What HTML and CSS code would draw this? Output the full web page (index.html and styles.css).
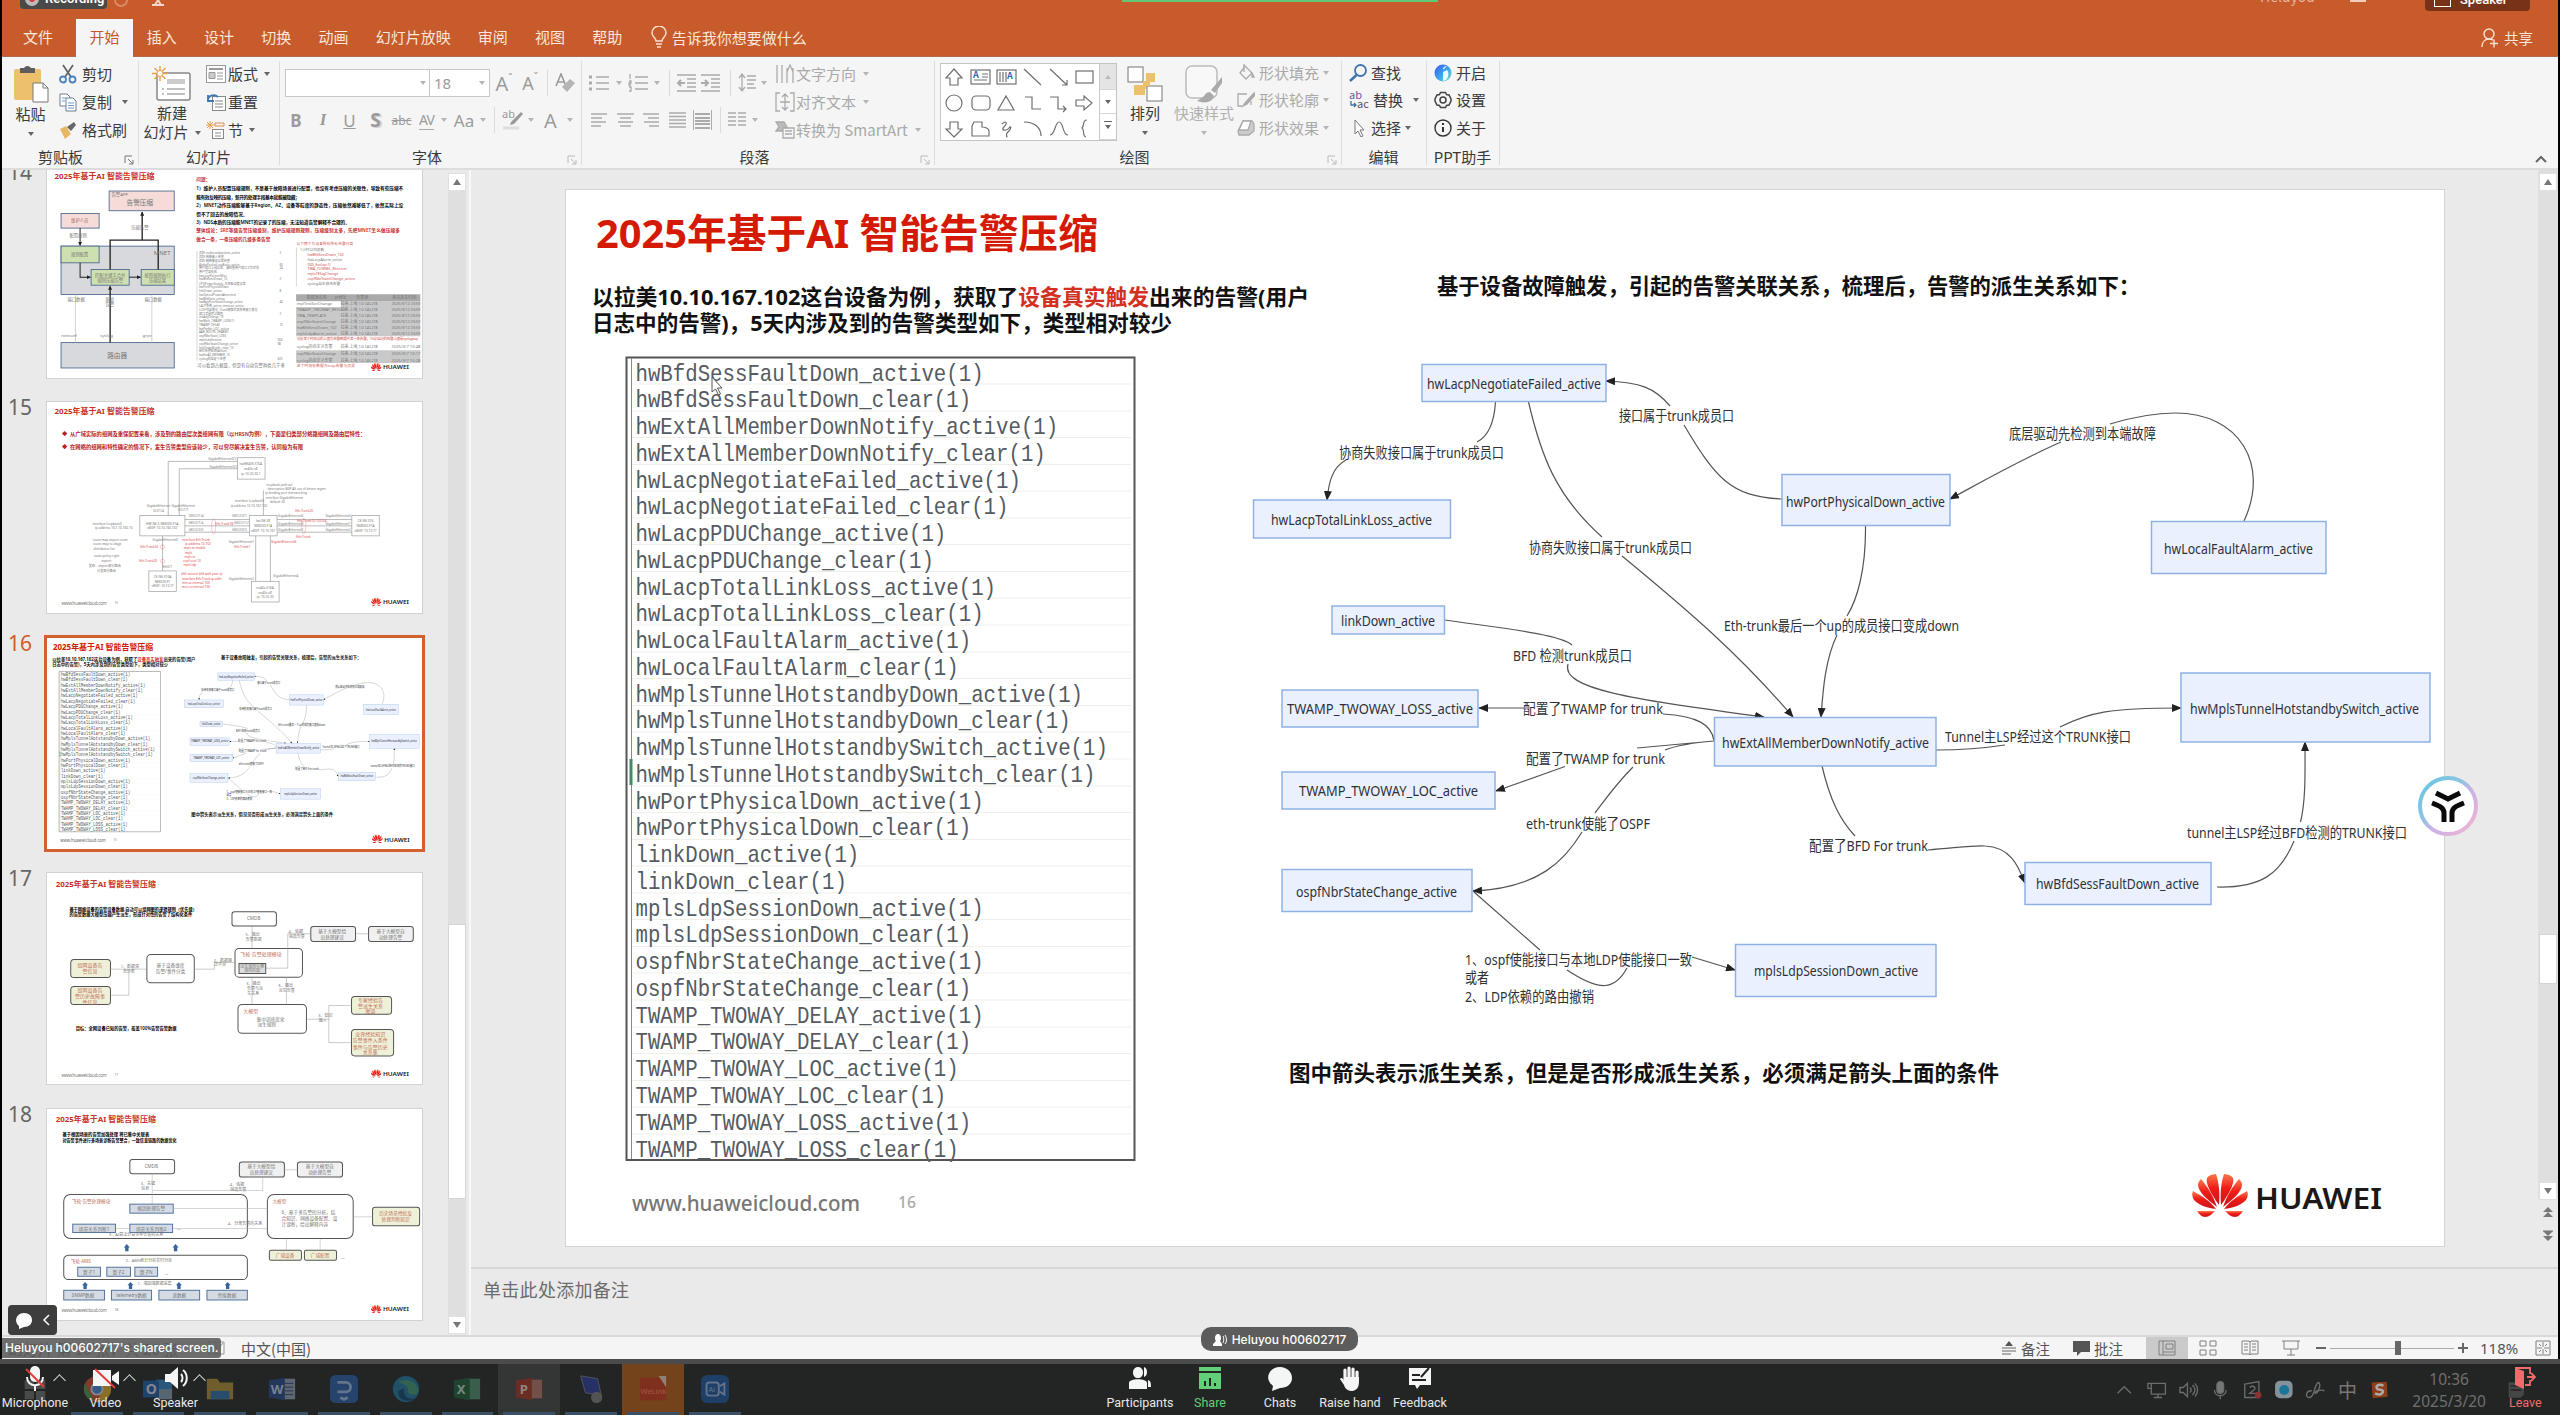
FILE: index.html
```html
<!DOCTYPE html>
<html lang="zh-CN">
<head>
<meta charset="utf-8">
<title>2025年基于AI 智能告警压缩</title>
<link rel="stylesheet" href="styles.css">
</head>
<body>
<svg class="defs" width="0" height="0">
  <defs>
    <marker id="arrow" markerUnits="userSpaceOnUse" markerWidth="10" markerHeight="8" refX="9" refY="4" orient="auto"><path d="M0 0 10 4 0 8z" fill="#222"/></marker>
    <marker id="arrow-s" markerUnits="userSpaceOnUse" markerWidth="12" markerHeight="12" refX="11" refY="6" orient="auto"><path d="M0 0 12 6 0 12z" fill="#222"/></marker>
    <linearGradient id="petal" x1="0" y1="0" x2="0" y2="1"><stop offset="0" stop-color="#fb7a4c"/><stop offset=".45" stop-color="#f01c18"/><stop offset="1" stop-color="#c8141a"/></linearGradient>
    <linearGradient id="ring" x1="0" y1="0" x2="1" y2="1"><stop offset="0" stop-color="#62c5e0"/><stop offset=".4" stop-color="#8fc4e4"/><stop offset=".55" stop-color="#c6b2e6"/><stop offset="1" stop-color="#f6b4d2"/></linearGradient>
    <linearGradient id="orb" x1="0" y1="0" x2="1" y2="1"><stop offset="0" stop-color="#3b5bf0"/><stop offset=".5" stop-color="#3aa0f0"/><stop offset="1" stop-color="#7fe0b0"/></linearGradient>
    <symbol id="hw-mark" viewBox="0 0 56 43">
      <g fill="url(#petal)">
        <path d="M27 31C19 20 13 9 15 4 17 1 21 0 24 0c3 8 4 20 3 31z"/>
        <path d="M29 31C37 20 43 9 41 4 39 1 35 0 32 0c-3 8-4 20-3 31z"/>
        <path d="M25 33C17 27 6 18 6 11c0-2 1-4 3-6 6 7 12 16 16 28z"/>
        <path d="M31 33C39 27 50 18 50 11c0-2-1-4-3-6-6 7-12 16-16 28z"/>
        <path d="M24 35C15 34 3 30 1 24c-1-3-1-5 0-7 9 5 17 10 23 18z"/>
        <path d="M32 35C41 34 53 30 55 24c1-3 1-5 0-7-9 5-17 10-23 18z"/>
        <path d="M23 37H5c2 3 5 6 8 6 4 0 7-3 10-6z"/>
        <path d="M33 37h18c-2 3-5 6-8 6-4 0-7-3-10-6z"/>
      </g>
    </symbol>
    <g id="thumb-logo"><use href="#hw-mark" width="32" height="25"/><text class="hw" x="36" y="19" font-size="16" textLength="78" lengthAdjust="spacingAndGlyphs">HUAWEI</text></g>
  </defs>
</svg>

<div class="app">
  <header class="titlebar">
    <nav class="tabs">
      <span class="tab first">文件</span><span class="tab active">开始</span><span class="tab">插入</span><span class="tab">设计</span><span class="tab">切换</span><span class="tab">动画</span><span class="tab">幻灯片放映</span><span class="tab">审阅</span><span class="tab">视图</span><span class="tab">帮助</span>
      <span class="tell"><svg width="16" height="22" viewBox="0 0 16 22" fill="none" stroke="#fbe0d2" stroke-width="1.5"><path d="M5 15c0-3-4-4-4-8a7 7 0 0 1 14 0c0 4-4 5-4 8zM5 18h6M6 21h4"/></svg>告诉我你想要做什么</span>
    </nav>
    <span class="share-link"><svg width="18" height="20" viewBox="0 0 18 20" fill="none" stroke="#fbe0d2" stroke-width="1.4"><circle cx="8" cy="6" r="5"/><path d="M1 19c0-5 3-8 7-8 2 0 3 .5 4 1M9 15.500h8M13 11.500v8"/></svg>共享</span>
    <div class="pill recording"><i></i>Recording</div>
    <div class="title-bits"><svg width="50" height="8" viewBox="0 0 50 8"><path d="M1 0a6 6 0 0 0 12 0" fill="none" stroke="#d98a68" stroke-width="2"/><path d="M38 5h12M41 5l3-5 3 5" fill="none" stroke="#f5d5c6" stroke-width="2"/></svg></div>
    <div class="green-line"></div>
    <div class="account">Heluyou</div>
    <div class="min-mark"></div>
    <div class="pill speaker-pill"><i></i>Speaker</div>
  </header>

  <section class="ribbon">
    <div class="group g-clip">
      <div class="body">
        <div class="big"><svg width="36" height="38" viewBox="0 0 36 38"><rect x="1" y="4" width="27" height="31" rx="2" fill="#ecc06c"/><path d="M7 8V3h4a4 4 0 0 1 7 0h4v5z" fill="#5d5d5d"/><path d="M20 18h10l5 5v14H20z" fill="#fff" stroke="#777"/><path d="M30 18v5h5" fill="none" stroke="#777"/></svg><b>粘贴</b><i class="caret"></i></div>
        <div class="rows">
          <span><svg width="18" height="20" viewBox="0 0 18 20" fill="none" stroke-width="1.8"><path d="M4 1l8 12M14 1L6 13" stroke="#666"/><circle cx="4" cy="15.500" r="3" stroke="#4b83bd"/><circle cx="13.500" cy="15.500" r="3" stroke="#4b83bd"/></svg>剪切</span>
          <span><svg width="18" height="20" viewBox="0 0 18 20" fill="#fff" stroke="#6f7f92"><path d="M1 2h7l3 3v9H1z"/><path d="M7 6h7l3 3v10H7z"/><path d="M9 11h6M9 13.500h6M9 16h6M3 6h4M3 9h3" stroke="#6b9bcc"/></svg>复制<i class="caret wide"></i></span>
          <span><svg width="18" height="18" viewBox="0 0 18 18"><path d="M1 8l6-3 5 8-6 5z" fill="#e8b765"/><path d="M8 6l7-5 2 3-5 6z" fill="#666"/></svg>格式刷</span>
        </div>
      </div>
      <div class="label">剪贴板</div><svg class="launcher" viewBox="0 0 10 10"><path d="M1 8V1h7M4 4l5 5M9 5v4H5"/></svg>
    </div>
    <div class="group g-slides">
      <div class="body">
        <div class="big"><svg width="40" height="36" viewBox="0 0 40 36"><rect x="5" y="7" width="33" height="27" rx="2" fill="#fff" stroke="#888" stroke-width="1.5"/><path d="M15 13h18v5H15z" fill="#ccc"/><path d="M10 23h2M10 28h2M15 23h18M15 28h18" stroke="#aaa" stroke-width="1.5"/><path d="M8 0v15M0 7.500h16M2.500 2l11 11M13.500 2l-11 11" stroke="#e6a04a" stroke-width="1.400"/><circle cx="8" cy="7.500" r="3" fill="#fff" stroke="#e6a04a"/></svg><b>新建</b><b class="second">幻灯片<i class="caret"></i></b></div>
        <div class="rows">
          <span><svg width="20" height="18" viewBox="0 0 20 18" fill="none" stroke="#999"><rect x=".5" y=".5" width="19" height="17" fill="#fff"/><path d="M3 4h14" stroke-width="2"/><path d="M3 7.500h6v6H3z" fill="#ccc"/><path d="M11 8h6M11 11h6M11 14h6"/></svg>版式<i class="caret"></i></span>
          <span><svg width="20" height="18" viewBox="0 0 20 18" fill="none" stroke="#888"><rect x="6.500" y="3.500" width="13" height="14" fill="#fff"/><path d="M9 8h8M9 11h8M9 14h8"/><path d="M2 8C1 3 8 0 12 4M2 2v6h6" stroke="#3b78b5" stroke-width="1.800"/></svg>重置</span>
          <span><svg width="20" height="18" viewBox="0 0 20 18" fill="none" stroke="#888"><rect x="6.500" y="8.500" width="11" height="9" fill="#fff"/><path d="M9 12h6M9 15h6"/><path d="M9 2h9v3H9z" stroke="#dc8d4b"/><path d="M4 0v8M0 4h8M1 1l6 6M7 1L1 7" stroke="#e6a04a"/></svg>节<i class="caret"></i></span>
        </div>
      </div>
      <div class="label">幻灯片</div>
    </div>
    <div class="group g-font">
      <div class="frow1"><span class="box"><i class="caret dim"></i></span><span class="box size">18<i class="caret dim"></i></span><span class="ft">A<sup>ˆ</sup></span><span class="ft sm">A<sup>ˇ</sup></span><i class="vsep"></i><svg width="20" height="20" viewBox="0 0 20 20"><path d="M1 13L6 1l5 12M3 9h6" fill="none" stroke="#9a9a9a" stroke-width="1.600"/><path d="M7 14l8-8 5 4-8 9z" fill="#b5b5b5"/></svg></div>
      <div class="frow2"><b>B</b><em>I</em><u>U</u><b class="shadow">S</b><s>abc</s><span class="av">AV</span><i class="caret dim"></i><span>Aa</span><i class="caret dim"></i><i class="vsep"></i><svg width="22" height="22" viewBox="0 0 22 22"><text x="0" y="9" font-size="11" fill="#999">ab</text><path d="M9 13L19 3l2 2-9 10-4 1z" fill="#999"/><path d="M1 19h16" stroke="#ddd" stroke-width="3"/></svg><i class="caret dim"></i><span class="ft">A</span><i class="caret dim"></i></div>
      <div class="label">字体</div><svg class="launcher dim" viewBox="0 0 10 10"><path d="M1 8V1h7M4 4l5 5M9 5v4H5"/></svg>
    </div>
    <div class="group g-para">
      <div class="pcol">
        <div class="prow1">
          <svg width="20" height="18" viewBox="0 0 20 18" class="ln"><path d="M7 3h13M7 9h13M7 15h13"/><path d="M0 3h3M0 9h3M0 15h3" stroke-width="3"/></svg><i class="caret dim"></i>
          <svg width="20" height="18" viewBox="0 0 20 18" class="ln"><path d="M7 3h13M7 9h13M7 15h13"/><path d="M2 0v5M1 7h2v2H1v2h2M1 13h2v4H1"/></svg><i class="caret dim"></i><i class="vsep"></i>
          <svg width="20" height="18" viewBox="0 0 20 18" class="ln"><path d="M0 1h19M10 5h9M10 9h9M10 13h9M0 17h19"/><path d="M8 9H1M4 6L1 9l3 3" stroke-width="2"/></svg>
          <svg width="20" height="18" viewBox="0 0 20 18" class="ln"><path d="M0 1h19M10 5h9M10 9h9M10 13h9M0 17h19"/><path d="M0 9h7M4 6l3 3-3 3" stroke-width="2"/></svg><i class="vsep"></i>
          <svg width="18" height="20" viewBox="0 0 18 20" class="ln"><path d="M9 3h9M9 7h9M9 11h7M9 15h9"/><path d="M4 1v17M1 5l3-4 3 4M1 14l3 4 3-4"/></svg><i class="caret dim"></i>
        </div>
        <div class="prow2">
          <svg width="17" height="14" viewBox="0 0 17 14" class="ln"><path d="M0 1h16M0 5h11M0 9h15M0 13h10"/></svg>
          <svg width="17" height="14" viewBox="0 0 17 14" class="ln"><path d="M0 1h17M3 5h11M1 9h15M3 13h11"/></svg>
          <svg width="17" height="14" viewBox="0 0 17 14" class="ln"><path d="M1 1h16M6 5h11M2 9h15M7 13h10"/></svg>
          <svg width="17" height="16" viewBox="0 0 17 16" class="ln"><path d="M0 1h17M0 4.500h17M0 8h17M0 11.500h17M0 15h17"/></svg>
          <svg width="19" height="20" viewBox="0 0 19 20" class="ln"><path d="M0 0v20M19 0v20M2 4h15M2 8h15M2 11h15M2 14h15M2 18h15" stroke-width="2"/></svg><i class="vsep"></i>
          <svg width="18" height="16" viewBox="0 0 18 16" class="ln"><path d="M0 1h8M0 5h8M0 9h8M0 13h8M10 1h8M10 5h8M10 9h8M10 13h8"/></svg><i class="caret dim"></i>
        </div>
      </div>
      <div class="rows dimrows">
        <span><svg width="20" height="20" viewBox="0 0 20 20" class="ln"><path d="M2 1v18M7 1v18M12 19V4M18 19V4M12 8l3-7 3 7"/></svg>文字方向<i class="caret dim"></i></span>
        <span><svg width="20" height="20" viewBox="0 0 20 20" class="ln"><path d="M5 1H1v18h4M15 1h4v18h-4M10 2v16M7 5l3-3 3 3M7 15l3 3 3-3M5 10h10"/></svg>对齐文本<i class="caret dim"></i></span>
        <span><svg width="20" height="18" viewBox="0 0 20 18" class="ln"><path d="M1 1h8l3 5-3 4H1l3-4z" fill="#bbb"/><path d="M8 7h11v10H8zM10 10h7M10 13h7" fill="#f5f5f5"/></svg>转换为 SmartArt<i class="caret dim"></i></span>
      </div>
      <div class="label">段落</div><svg class="launcher dim" viewBox="0 0 10 10"><path d="M1 8V1h7M4 4l5 5M9 5v4H5"/></svg>
    </div>
    <div class="group g-draw">
      <div class="gallery">
        <svg width="158" height="77" viewBox="0 0 158 77" fill="none" stroke="#707070" stroke-width="1.200">
          <path d="M13 5l8 9h-4v7H9v-7H5z"/><rect x="30" y="6" width="19" height="14"/><path d="M41 10h6M41 13h6M33 16h13"/><text x="32" y="14" font-size="9" stroke="none" fill="#2f6cb0" font-weight="700">A</text>
          <rect x="56" y="6" width="19" height="14"/><path d="M59 8v10M62 8v10M65 8v10"/><text x="66" y="15" font-size="9" stroke="none" fill="#2f6cb0" font-weight="700">A</text>
          <path d="M83 5l17 16M109 5l17 16M126 16v5h-5"/><rect x="135" y="7" width="17" height="12"/>
          <circle cx="13" cy="39" r="8"/><rect x="31" y="32" width="18" height="14" rx="4"/><path d="M65 32l8 14H57zM84 33h7v12h9M109 33h8v12h8M122 42l3 3-3 3M135 36h8v-4l8 7-8 7v-4h-8z"/>
          <path d="M13 73l8-8h-4v-7H9v7H5zM33 58h8v5c4 0 7 2 7 4v5H31V62zM61 60c4-4 6-1 2 3s3 4 5 1 3 0-1 4 1 4-2 5M83 58c11 0 17 6 17 14M109 71c5 0 5-13 9-13 5 0 3 13 9 13M146 56c-5 0-2 5-5 8 3 2 0 8 4 9"/>
        </svg>
        <div class="gscroll"><span class="off"><i></i></span><span><i class="caret"></i></span><span><i class="caret more"></i></span></div>
      </div>
      <div class="big arrange"><svg width="36" height="36" viewBox="0 0 36 36"><path d="M19 7h9v9h-9zM7 19h11v10H7z" fill="#ecc06c"/><rect x="1" y="1" width="15" height="15" fill="#fff" stroke="#777"/><rect x="20" y="20" width="15" height="15" fill="#fff" stroke="#777"/><path d="M16 15h7v5h-4v3h-3z" fill="#ecc06c"/></svg><b>排列</b><i class="caret"></i></div>
      <div class="big quick"><svg width="38" height="38" viewBox="0 0 38 38"><rect x="1" y="1" width="31" height="32" rx="6" fill="#f8f8f8" stroke="#bbb" stroke-width="1.500"/><path d="M37 12L26 25l4 3 7-10zM25 27c-4 0-5 3-7 5l-6 4c8 3 16 1 17-5z" fill="#aaa"/></svg><b>快速样式</b><i class="caret dim"></i></div>
      <div class="rows tight dimrows">
        <span><svg width="18" height="18" viewBox="0 0 18 18" class="ln"><path d="M8 2l7 7-6 6-6-6zM7 0v8"/><path d="M15 9l2 4h-2z" fill="#aaa"/></svg>形状填充<i class="caret dim"></i></span>
        <span><svg width="18" height="18" viewBox="0 0 18 18" class="ln"><path d="M10 3H1v12h4M14 10v4"/><path d="M17 2L8 12l-2 3 4-2 8-9z" fill="#aaa"/></svg>形状轮廓<i class="caret dim"></i></span>
        <span><svg width="18" height="18" viewBox="0 0 18 18" class="ln"><path d="M6 2h9l2 3v7l-5 4H2l-1-4z" fill="#ccc"/><path d="M6 2h8l-3 9H2z" fill="#fff"/></svg>形状效果<i class="caret dim"></i></span>
      </div>
      <div class="label">绘图</div><svg class="launcher dim" viewBox="0 0 10 10"><path d="M1 8V1h7M4 4l5 5M9 5v4H5"/></svg>
    </div>
    <div class="group g-edit">
      <div class="rows tight">
        <span><svg width="18" height="18" viewBox="0 0 18 18" fill="none" stroke="#3f74ad" stroke-width="1.800"><circle cx="11.500" cy="6.500" r="5.500"/><path d="M7.500 11L1 17" stroke-width="2.500"/></svg>查找</span>
        <span><svg width="20" height="18" viewBox="0 0 20 18"><text x="0" y="8" font-size="11" fill="#7a559f">ab</text><text x="8" y="17" font-size="11" fill="#555">ac</text><path d="M2 10v4h5M5 12l2 2-2 2" fill="none" stroke="#3f74ad" stroke-width="1.300"/></svg>替换<i class="caret wide"></i></span>
        <span><svg width="18" height="18" viewBox="0 0 18 18"><path d="M6 1v14l3-3 3 6 2-1-3-6h4z" fill="#fff" stroke="#777"/></svg>选择<i class="caret"></i></span>
      </div>
      <div class="label">编辑</div>
    </div>
    <div class="group g-help">
      <div class="rows tight">
        <span><svg width="18" height="18" viewBox="0 0 18 18"><circle cx="9" cy="9" r="8.500" fill="url(#orb)"/><path d="M9 17V8l4-2c2 2 2 7-1 10zM9 6c0-3 2-4 4-4z" fill="#e8fbff"/></svg>开启</span>
        <span><svg width="18" height="18" viewBox="0 0 18 18" fill="none" stroke="#444" stroke-width="1.500"><path d="M6.500 1.500h5l1 2 2.500.5 2 4v2l-2 4-2.500.5-1 2h-5l-1-2L3 14 1 10V8l2-4 2.500-.5z"/><circle cx="9" cy="9" r="3"/></svg>设置</span>
        <span><svg width="18" height="18" viewBox="0 0 18 18" fill="none" stroke="#333" stroke-width="1.400"><circle cx="9" cy="9" r="8"/><path d="M9 4v2M9 8v5" stroke-width="2"/></svg>关于</span>
      </div>
      <div class="label">PPT助手</div>
    </div>
    <svg class="collapse" viewBox="0 0 12 8"><path d="M1 7l5-5 5 5" fill="none" stroke="#666" stroke-width="2"/></svg>
  </section>

  <main class="work">
    <aside class="thumbs">
      <ol>
        <li><b>14</b>
          <svg class="thumb" viewBox="142 3 1123 632">
            <text class="tt" x="164" y="30" textLength="300" lengthAdjust="spacingAndGlyphs">2025年基于AI 智能告警压缩</text>
            <g stroke="#44628c" stroke-width="2.500" fill="#d7d9dc"><rect x="184" y="240" width="339" height="145"/><rect x="184" y="529" width="339" height="76"/><rect x="328" y="75" width="195" height="59" fill="#f6dcd8"/><rect x="184" y="142" width="114" height="44" fill="#f6dcd8"/><g fill="#cfe0b0"><rect x="184" y="240" width="114" height="50"/><rect x="274" y="310" width="114" height="47"/><rect x="424" y="310" width="99" height="47"/></g></g>
            <path d="M227 385v144M456 385v144" stroke="#bbb" fill="none" stroke-width="2"/>
            <g fill="none" stroke="#222" stroke-width="4" marker-end="url(#arrow-s)"><path d="M241 186v52" stroke-width="3"/><path d="M241 290v43h31" stroke-width="3"/><path d="M388 333h34" stroke-width="3"/><path d="M427 222v-84"/><path d="M331 529V360"/></g>
            <path d="M331 310V222h144v88" fill="none" stroke="#222" stroke-width="4"/>
            <g class="mid" font-size="20"><text x="420" y="108">告警压缩</text><text x="487" y="260" font-size="18">MNET</text><text x="352" y="567">路由器</text></g>
            <g class="mid" font-size="13"><text x="240" y="163" fill="#a66">维护人员</text><text x="240" y="265">规则配置</text><text x="331" y="326">匹配关键字合并</text><text x="331" y="341">规则压缩告警</text><text x="473" y="326">按照规则执行</text><text x="473" y="341">压缩结果</text><text x="360" y="84">告警APP</text><text x="235" y="206">配置规则</text><text x="420" y="182">压缩告警</text><text x="229" y="398">端口数据</text><text x="330" y="398">原始</text><text x="330" y="412">告警</text><text x="460" y="398">端口数据</text><text x="208" y="507">netconf</text><text x="320" y="507">syslog</text><text x="442" y="507">grpc</text></g>
            <g class="bb" font-size="14"><text x="589" y="39" fill="#c33">问题：</text><text x="589" y="66" textLength="620">1）维护人员配置压缩规则，不是基于故障场景进行配置，也没有考虑压缩的关联性，导致有些压缩不</text><text x="589" y="92" textLength="310">能有效反映的压缩，新开的处理手段基本就能被隐藏；</text><text x="589" y="117" textLength="620">2）MNET动作压缩能够基于Region、AZ、设备等粒度的静态性，压缩依然难够低了，依然实际上没</text><text x="589" y="143">但不了回去的故障情况。</text><text x="589" y="168" textLength="460">3）NDS本质的压缩能MNET的记录了的压缩，无法知道告警解释不合理的。</text><g fill="#c8282a"><text x="589" y="191" textLength="610">整体结论：SRE等级告警压缩级别，维护压缩规则规则，压缩级别太多，先把MNET怎么做压缩多</text><text x="589" y="218" textLength="222">做合一条，一条压缩的几级多条告警</text></g></g>
            <path d="M591 255v328M889 245v115" stroke="#888"/>
            <g class="tiny" font-size="9"><text x="597" y="262">活跃 outboundpackets_active</text><text x="597" y="273">活跃 网络接入告警</text><text x="597" y="284">活跃 网络接收异常告警</text><text x="597" y="296">AlphaPacketLossRatio_active</text><text x="597" y="307">用户端口上线异常，请检查用户端口工作状态</text><text x="597" y="318">用户登录失败</text><text x="597" y="329">hwLacpPartnerMisc</text><text x="597" y="340">hwBfdSessDown_10</text><text x="597" y="352">CPUPowerSupply_主控板温度异常</text><text x="597" y="363">hwPortPhysicalDown</text><text x="597" y="374">linkDown_active</text><text x="597" y="386">hwOpticalPowerAbnormal</text><text x="597" y="397">hwBfdState_active</text><text x="597" y="408">hwBgpPeerStateChange_active</text><text x="597" y="420">LACP系统_active_timeout_active</text><text x="597" y="431">LLDP邻居变化_Trunk链路对端系统能力变化</text><text x="597" y="442">端口流量超过阈值</text><text x="597" y="453">isisAdjChange_10</text><text x="597" y="464">hwMpls_TWAMP_LOSS(1)</text><text x="597" y="476">TWAMP_DELAY</text><text x="597" y="487">hwPtnExt_LOC_active</text><text x="597" y="498">AAR_ROUTE_SHARED</text><text x="597" y="510">ospfNbrState_LOSS</text><text x="597" y="521">mplsLdpSession</text><text x="597" y="533">ospfNbrStateChange_active</text><text x="597" y="544">linkDownNotify_clear_10</text><text x="597" y="555">BFD告警检测(Active)</text><text x="597" y="567">hwExtAll_MEMBER_10</text><text x="597" y="578">syslog的自定义告警</text></g>
            <g class="tiny" font-size="9"><text x="838" y="262">2</text><text x="838" y="296">60</text><text x="838" y="307">24</text><text x="838" y="340">2</text><text x="838" y="374">8</text><text x="838" y="408">40</text><text x="838" y="442">2</text><text x="838" y="476">10</text><text x="832" y="521">500</text><text x="832" y="533">98</text><text x="832" y="578">620</text></g>
            <text class="tiny" x="592" y="595" font-size="13" textLength="262">可以看到占据量，但是有自动告警种类几千多</text>
            <g class="tiny red" font-size="11"><text x="889" y="231" textLength="170">以下两个为设备所有所有告警归类</text><text x="922" y="265">hwBfdSessDown_102</text><text x="922" y="294">ISIS_Ext(up:1)</text><text x="922" y="308">TWA_TUNNEL_Receiver</text><text x="922" y="323">mplsTESigChange</text><text x="922" y="337">ospfNbrStateChange_active</text></g>
            <g class="tiny" font-size="11"><text x="900" y="251">1小时以内总数</text><text x="922" y="280">hwLacpAlarm_active</text><text x="922" y="351">syslog自主修改告警</text></g>
            <path d="M888 384h372M888 405h372v105H888zM888 552h372v38H888z" fill="#c9c9c9"/><path d="M888 384h372v21H888z" fill="#aaa"/><path d="M888 405h134v17H888zM888 532h134v18H888z" fill="#fff"/>
            <g class="tiny" font-size="12"><text x="920" y="395">数据源名称</text><text x="1004" y="395">IP地址</text><text x="1068" y="395">告警源</text><text x="1176" y="395">首次发生时间</text><text x="890" y="413">mplTestSvcChange</text><text x="890" y="431">TWAMP_TWOWAY_RESULT</text><text x="890" y="449">TWA_TEMPLATE</text><text x="890" y="467">ospfNbrStateChange</text><text x="890" y="485">hwBfdSessDown_102</text><text x="890" y="503">mplsLdpAlarm_active</text><text x="890" y="541">syslog的自定义告警</text><text x="890" y="563">ospfNbrStateChange</text><text x="890" y="583">syslog的自定义告警</text></g>
            <g class="tiny" font-size="12"><text x="1022" y="413" textLength="110">拉美-上海_1.0.140.218</text><text x="1022" y="431" textLength="110">拉美-上海_1.0.140.218</text><text x="1022" y="449" textLength="110">拉美-上海_1.0.140.218</text><text x="1022" y="467" textLength="110">拉美-上海_1.0.140.218</text><text x="1022" y="485" textLength="110">拉美-上海_1.0.140.218</text><text x="1022" y="503" textLength="110">拉美-上海_1.0.140.218</text><text x="1022" y="541" textLength="110">拉美-上海_1.0.140.218</text><text x="1022" y="563" textLength="110">拉美-上海_1.0.140.218</text><text x="1022" y="583" textLength="110">拉美-上海_1.0.140.218</text><text x="1174" y="413" textLength="86">2025/3/12 23:59</text><text x="1174" y="431" textLength="86">2025/3/12 23:59</text><text x="1174" y="449" textLength="86">2025/3/12 23:59</text><text x="1174" y="467" textLength="86">2025/3/12 23:59</text><text x="1174" y="485" textLength="86">2025/3/12 23:59</text><text x="1174" y="503" textLength="86">2025/3/12 23:59</text><text x="1174" y="541" textLength="86">2025/3/7 10:48</text><text x="1174" y="563" textLength="86">2025/3/7 10:17</text><text x="1174" y="583" textLength="86">2025/3/7 10:28</text></g>
            <g class="tiny red" font-size="11"><text x="890" y="517" textLength="364">分析某个时间点的上面为告警数据中某一条告警，10点04分的告警上面是syslogtrap</text><text x="890" y="597" textLength="174">这个时段有数据为trap告警与误报</text></g>
            <use href="#thumb-logo" x="1112" y="590"/>
          </svg></li>
        <li><b>15</b>
          <svg class="thumb" viewBox="142 710 1123 632">
            <text class="tt" x="164" y="738" textLength="300" lengthAdjust="spacingAndGlyphs">2025年基于AI 智能告警压缩</text>
            <g class="bb" font-size="16" fill="#b82020"><text x="187" y="806">◆</text><text x="211" y="806" textLength="885">从广域实际的组网及重保配置来看，涉及到的路由层次类组网有限（以HRSN为例），下面是归类部分络路组网及路由层特性：</text><text x="187" y="845">◆</text><text x="211" y="845" textLength="698">在网络的组网和特性确定的情况下，发生告警类型应该较少，可以穷尽解决发生告警，认同极为有限</text></g>
            <g fill="none" stroke="#999" stroke-width="2"><rect x="712" y="877" width="83" height="64"/><rect x="420" y="1050" width="135" height="61"/><rect x="749" y="1050" width="82" height="61"/><rect x="1055" y="1050" width="82" height="61"/><rect x="447" y="1216" width="82" height="62"/><rect x="754" y="1247" width="83" height="62"/><path d="M712 888H505v162M712 910H538v140M555 1062h194M555 1081h194M555 1100h194M831 1062h224M831 1081h224M831 1100h224M767 1111v136M811 1111v136M488 1111v105M790 1050v-75"/></g>
            <g fill="none" stroke="#e66"><ellipse cx="641" cy="1083" rx="6" ry="23"/><ellipse cx="911" cy="1081" rx="6" ry="23"/><circle cx="488" cy="1144" r="6"/><circle cx="488" cy="1187" r="6"/></g>
            <g class="mid" font-size="9.500"><text x="752" y="897">hwNE40E-X16A</text><text x="752" y="911">ne40e-x8</text><text x="752" y="925">ip: 10.20.30.1</text><text x="487" y="1074">HW-NE-X-NE8000-F1A</text><text x="487" y="1088">eBGP: 10.10.160.102</text><text x="789" y="1067">hw-NE-X8</text><text x="789" y="1081">NE8000-F1A</text><text x="789" y="1095">eBGP: 10.10.167</text><text x="1096" y="1067">CE-NE-X16</text><text x="1096" y="1081">NE8000-F1A</text><text x="1096" y="1095">eBGP: 10.10.77</text><text x="488" y="1234">CE-NE-X16A</text><text x="488" y="1248">NE8000-F1</text><text x="488" y="1262">eBGP: 10.10.77</text><text x="795" y="1267">ne40e-X16A</text><text x="795" y="1281">ne40e-x8</text><text x="795" y="1295">ip: 10.20.30</text>
            <text x="667" y="881">GigabitEthernet0/2</text><text x="670" y="906">GigabitEthernet0/2</text><text x="476" y="1022">GigabitEthernet</text><text x="476" y="1036">0/2/1/4</text><text x="550" y="1021">GigabitEthernet</text><text x="550" y="1034">0/2/1/1</text><text x="589" y="1051">GE0/2/1/4</text><text x="588" y="1073">GE0/2/1/4</text><text x="588" y="1092">GE0/2/0/0</text><text x="718" y="1051">GE0/2/0/1</text><text x="724" y="1071">GE0/2/1/2</text><text x="718" y="1092">GE0/2/0/3</text><text x="872" y="1051">GigabitEthernet0</text><text x="872" y="1074">GigabitEthernet0</text><text x="872" y="1092">GigabitEthernet1</text><text x="1014" y="1051">GigabitEthernet0</text><text x="1014" y="1074">GigabitEthernet1</text><text x="1014" y="1092">GigabitEthernet2</text><text x="322" y="1074">interface loopback0</text><text x="342" y="1088">ip address 10.1.10.160.10</text><text x="331" y="1122">route map export route</text><text x="322" y="1136">route-map to ebgp</text><text x="313" y="1151">distributor-list</text><text x="320" y="1172">route-policy right</text><text x="320" y="1186">export</text><text x="315" y="1202">发布：import部分路由</text><text x="320" y="1216">分发部分路由</text><text x="496" y="1122">GigabitEthernet0</text><text x="502" y="1204">Eth0/1</text><text x="748" y="1007">interface loopback0</text><text x="747" y="1022">ip address 10.10.167.102</text><text x="838" y="958">loopback path acl</text><text x="890" y="972">description BGP AS out of device mgmt</text><text x="858" y="984">ip binding port interworking</text><text x="853" y="997">interface GigabitEthernet</text><text x="832" y="1010">default 30</text><text x="724" y="1129">GigabitEthernet1</text><text x="724" y="1239">GigabitEthernet2</text><text x="857" y="1231">GigabitEthernet4</text></g>
            <g class="mid redmid" font-size="9.500"><text x="673" y="1076">Eth-Trunk1B</text><text x="912" y="1037">Eth-Trunk20</text><text x="935" y="1065">Eth-Trunk10.102/24</text><text x="910" y="1114">Eth-Trunk</text><text x="851" y="1129">GigabitEthernet6</text><text x="727" y="1144">Eth-Trunk1</text><text x="448" y="1144">Eth-Trunk20</text><text x="445" y="1187">Eth-Trunk20</text><text x="588" y="1122">interface Eth-Trunk</text><text x="594" y="1135">ip address 10.102</text><text x="584" y="1148">mpls te enable</text><text x="566" y="1161">mpls</text><text x="570" y="1173">mpls te</text><text x="576" y="1186">ospf cost 10</text><text x="570" y="1199">mpls ldp</text><text x="606" y="1226">bfd session bfd with peer-ip</text><text x="606" y="1239">interface Eth-Trunk.ip addr</text><text x="588" y="1252">min-tx-interval 100</text><text x="588" y="1265">min-rx-interval 100</text></g>
            <text class="tiny" x="185" y="1312" font-size="14" textLength="136">www.huaweicloud.com</text><text class="tiny" x="344" y="1312" font-size="9">15</text>
            <use href="#thumb-logo" x="1112" y="1296"/>
          </svg></li>
        <li class="current"><b>16</b>
          <svg class="thumb" viewBox="566 190 1878 1056"><use href="#slide16"/></svg></li>
        <li><b>17</b>
          <svg class="thumb" viewBox="142 757 1123 632">
            <text class="tt" x="168" y="789" textLength="300" lengthAdjust="spacingAndGlyphs">2025年基于AI 智能告警压缩</text>
            <g class="bb" font-size="13"><text x="209" y="865" textLength="382" lengthAdjust="spacingAndGlyphs">基于网络设备的告警设备数据,自动可以组网图的逻辑规则（优先级）</text><text x="209" y="881" textLength="368" lengthAdjust="spacingAndGlyphs">的告警数据大模型压缩产生派生，形成针对性的告警了结构化条件</text><text x="228" y="1222" textLength="302" lengthAdjust="spacingAndGlyphs">目标：全网设备已知的告警，覆盖100%告警告警数据</text></g>
            <g class="boxes"><rect x="696" y="873" width="133" height="43" rx="8"/><rect x="441" y="1001" width="142" height="85" rx="12"/><rect x="705" y="983" width="202" height="86" rx="12"/><rect x="714" y="1151" width="205" height="86" rx="12"/><rect x="932" y="917" width="134" height="45" rx="8" fill="#f0f0f0"/><rect x="1105" y="917" width="134" height="45" rx="8" fill="#f0f0f0"/><rect x="717" y="1028" width="80" height="30" fill="#ddd"/><g fill="#eef0d8"><rect x="213" y="1016" width="119" height="54" rx="10"/><rect x="213" y="1097" width="119" height="54" rx="10"/><rect x="1054" y="1127" width="120" height="53" rx="10"/><rect x="1054" y="1226" width="126" height="79" rx="10"/></g></g>
            <path d="M332 1045h109M332 1123h55v-78M583 1045h60v-20h62M756 916v67M756 1069v82M859 1069v82M797 1042h66V939h69M1066 939h39M919 1195h68M1054 1154h-68v111h68" fill="none" stroke="#999" stroke-width="1.500"/>
            <g class="mid" font-size="14"><text x="761" y="891">CMDB</text><text x="512" y="1034">基于设备维度</text><text x="512" y="1052">告警/事件分类</text><text x="996" y="932">基于大模型给</text><text x="996" y="950">出处理建议</text><text x="1171" y="932">基于大模型自</text><text x="1171" y="950">动处理告警</text><text x="812" y="1195">集中训练优化</text><text x="800" y="1209">派生规则</text></g>
            <g class="mid" font-size="12"><text x="758" y="942">5、输出</text><text x="761" y="957">告警数据</text><text x="887" y="933">4、依据</text><text x="890" y="947">筛选告警</text><text x="390" y="1038">1、数据清</text><text x="387" y="1052">洗分类</text><text x="669" y="1018">2、数据输</text><text x="660" y="1032">送平台</text><text x="760" y="1089">3、输出</text><text x="765" y="1104">告警与派</text><text x="760" y="1119">生关系</text><text x="857" y="1095">6、输出</text><text x="860" y="1110">派生告警</text><text x="757" y="1038">派生规则引擎</text><text x="757" y="1050">规则匹配</text><text x="976" y="1183">3、知识</text><text x="968" y="1198">输入</text></g>
            <g class="mid warm" font-size="15"><text x="271" y="1034">组网设备告</text><text x="271" y="1052">警信息</text><text x="271" y="1107">组网设备告</text><text x="271" y="1124">警历史故障事</text><text x="271" y="1142">件信息</text><text x="783" y="1001">飞轮·告警处理模块</text><text x="752" y="1169">大模型</text><text x="1111" y="1137">专家经验告</text><text x="1111" y="1154">警派生关系</text><text x="1111" y="1171">图谱</text><text x="1110" y="1239">业界经验知识</text><text x="1110" y="1257">告警事件入条件</text><text x="1110" y="1277">事件与告警历史</text><text x="1110" y="1294">关系集</text></g>
            <text class="tiny" x="185" y="1361" font-size="14" textLength="136">www.huaweicloud.com</text><text class="tiny" x="344" y="1361" font-size="9">17</text>
            <use href="#thumb-logo" x="1112" y="1345"/>
          </svg></li>
        <li><b>18</b>
          <svg class="thumb" viewBox="142 85 1123 632">
            <text class="tt" x="168" y="116" textLength="300" lengthAdjust="spacingAndGlyphs">2025年基于AI 智能告警压缩</text>
            <g class="bb" font-size="13"><text x="188" y="161" textLength="260" lengthAdjust="spacingAndGlyphs">基于根因场景的告警加强处理 将已集中关联表</text><text x="188" y="177" textLength="342" lengthAdjust="spacingAndGlyphs">对告警事件进行多场景诊断告警整合，一致信息链路的数据优化</text></g>
            <g class="boxes"><rect x="390" y="236" width="134" height="43" rx="8"/><rect x="718" y="244" width="135" height="45" rx="8" fill="#f0f0f0"/><rect x="892" y="244" width="135" height="45" rx="8" fill="#f0f0f0"/><rect x="192" y="341" width="550" height="132" rx="20"/><rect x="802" y="341" width="257" height="132" rx="20"/><rect x="192" y="523" width="550" height="73" rx="14"/><g fill="#eef0d8"><rect x="1117" y="379" width="141" height="56" rx="8"/><rect x="808" y="508" width="96" height="30" rx="5"/><rect x="913" y="508" width="96" height="30" rx="5"/></g></g>
            <g fill="#d5dbe5" stroke="#54749e" stroke-width="3"><rect x="390" y="370" width="130" height="27"/><rect x="219" y="430" width="128" height="25"/><rect x="390" y="430" width="128" height="25"/><rect x="234" y="559" width="68" height="27"/><rect x="321" y="559" width="71" height="27"/><rect x="405" y="559" width="68" height="27"/><rect x="192" y="628" width="122" height="29"/><rect x="335" y="628" width="120" height="29"/><rect x="477" y="628" width="122" height="29"/><rect x="621" y="628" width="121" height="29"/></g>
            <path d="M457 279v91M457 329h331v-40M853 267h39M520 383h282M518 443h284M1059 408h58M347 443h43M859 473v35M960 473v35" fill="none" stroke="#aaa" stroke-width="1.500"/>
            <g fill="#35659b"><path d="M381 489l9 11h-4v11h-10v-11h-4zM527 489l9 11h-4v11h-10v-11h-4zM256 603l9 10h-4v11h-10v-11h-4zM392 603l9 10h-4v11h-10v-11h-4zM537 603l9 10h-4v11h-10v-11h-4zM683 603l9 10h-4v11h-10v-11h-4z"/></g>
            <g class="mid" font-size="14"><text x="454" y="257">CMDB</text><text x="784" y="257">基于大模型给</text><text x="784" y="274">出处理建议</text><text x="959" y="257">基于大模型自</text><text x="959" y="274">动处理告警</text><text x="454" y="383">根因处理告警</text><text x="283" y="443">场景关系判断1</text><text x="454" y="443">场景关系判断2</text><text x="537" y="440">…</text><text x="268" y="572">算子1</text><text x="356" y="572">算子2</text><text x="439" y="572">算子N</text><text x="500" y="575">…</text><text x="250" y="641">SNMP数据</text><text x="395" y="641">telemetry数据</text><text x="538" y="641">流数据</text><text x="681" y="641">性能数据</text><text x="925" y="395">6、基于多告警的分析，结</text><text x="928" y="412">合知识、网络设备配置、设</text><text x="914" y="430">计诊断，给出解释内容</text></g>
            <g class="mid" font-size="12"><text x="444" y="309">3、关键</text><text x="436" y="323">信息</text><text x="711" y="311">4、依据</text><text x="715" y="326">筛选告警</text><text x="735" y="427">4、分离告警的关系</text><text x="409" y="461">3、AI算法计算多条告警的关系</text><text x="447" y="540">2、AMS统计分析实时分析</text><text x="464" y="608">1、端到端数据采集</text></g>
            <g class="mid warm" font-size="14"><text x="274" y="361">飞轮·告警处理模块</text><text x="838" y="361">大模型</text><text x="243" y="540">飞轮·AMS</text><text x="1186" y="398">历史场景经验及</text><text x="1186" y="415">处理判断知识</text><text x="855" y="522">广域设备</text><text x="960" y="522">广域配置</text><text x="1028" y="527">…</text></g>
            <text class="tiny" x="185" y="688" font-size="14" textLength="136">www.huaweicloud.com</text><text class="tiny" x="344" y="688" font-size="9">18</text>
            <use href="#thumb-logo" x="1112" y="672"/>
          </svg></li>
      </ol>
      <div class="vbar left"><span class="vbtn"><i class="up"></i></span><span class="vthumb"></span><span class="vbtn"><i class="down"></i></span></div>
    </aside>

    <section class="stage">
      <div class="canvas">
        <svg class="slide" viewBox="566 190 1878 1056">
          <g id="slide16">
            <text class="s-title" x="596" y="232" textLength="502" lengthAdjust="spacingAndGlyphs">2025年基于AI 智能告警压缩</text>
            <g class="s-bold">
              <text x="592" y="296" textLength="717" lengthAdjust="spacingAndGlyphs">以拉美10.10.167.102这台设备为例，获取了<tspan fill="#d3301f">设备真实触发</tspan>出来的告警(用户</text>
              <text x="592" y="322" textLength="580" lengthAdjust="spacingAndGlyphs">日志中的告警)，5天内涉及到的告警类型如下，类型相对较少</text>
              <text x="1437" y="285" textLength="703" lengthAdjust="spacingAndGlyphs">基于设备故障触发，引起的告警关联关系，梳理后，告警的派生关系如下：</text>
              <text x="1289" y="1072" textLength="710" lengthAdjust="spacingAndGlyphs">图中箭头表示派生关系，但是是否形成派生关系，必须满足箭头上面的条件</text>
            </g>
            <path d="M626.500 357.500H1134.500V1160H626.500z" fill="#fff" stroke="#555" stroke-width="2"/>
            <path d="M631.500 358v801" stroke="#888"/>
            <path d="M632 384H1131M632 411H1131M632 437.500H1131M632 464.500H1131M632 491H1131M632 518H1131M632 544.500H1131M632 571.500H1131M632 598H1131M632 625H1131M632 652H1131M632 678.500H1131M632 705.500H1131M632 732H1131M632 759H1131M632 786H1131M632 812.500H1131M632 839.500H1131M632 866H1131M632 893H1131M632 919.500H1131M632 946.500H1131M632 973H1131M632 1000H1131M632 1027H1131M632 1053.500H1131M632 1080.500H1131M632 1107H1131M632 1134H1131" stroke="#efefea"/>
            <path d="M631 759v26" stroke="#3f8a6a" stroke-width="3"/>
            <g class="alarms" transform="translate(635.5 380.5) scale(.864 1)">
              <text y="0">hwBfdSessFaultDown_active(1)</text><text y="26.760">hwBfdSessFaultDown_clear(1)</text><text y="53.520">hwExtAllMemberDownNotify_active(1)</text><text y="80.280">hwExtAllMemberDownNotify_clear(1)</text><text y="107.040">hwLacpNegotiateFailed_active(1)</text><text y="133.800">hwLacpNegotiateFailed_clear(1)</text><text y="160.560">hwLacpPDUChange_active(1)</text><text y="187.320">hwLacpPDUChange_clear(1)</text><text y="214.080">hwLacpTotalLinkLoss_active(1)</text><text y="240.840">hwLacpTotalLinkLoss_clear(1)</text><text y="267.600">hwLocalFaultAlarm_active(1)</text><text y="294.360">hwLocalFaultAlarm_clear(1)</text><text y="321.120">hwMplsTunnelHotstandbyDown_active(1)</text><text y="347.880">hwMplsTunnelHotstandbyDown_clear(1)</text><text y="374.640">hwMplsTunnelHotstandbySwitch_active(1)</text><text y="401.400">hwMplsTunnelHotstandbySwitch_clear(1)</text><text y="428.160">hwPortPhysicalDown_active(1)</text><text y="454.920">hwPortPhysicalDown_clear(1)</text><text y="481.680">linkDown_active(1)</text><text y="508.440">linkDown_clear(1)</text><text y="535.200">mplsLdpSessionDown_active(1)</text><text y="561.960">mplsLdpSessionDown_clear(1)</text><text y="588.720">ospfNbrStateChange_active(1)</text><text y="615.480">ospfNbrStateChange_clear(1)</text><text y="642.240">TWAMP_TWOWAY_DELAY_active(1)</text><text y="669">TWAMP_TWOWAY_DELAY_clear(1)</text><text y="695.760">TWAMP_TWOWAY_LOC_active(1)</text><text y="722.520">TWAMP_TWOWAY_LOC_clear(1)</text><text y="749.280">TWAMP_TWOWAY_LOSS_active(1)</text><text y="776.040">TWAMP_TWOWAY_LOSS_clear(1)</text>
            </g>
            <g fill="none" stroke="#555" stroke-width="1.200">
              <path d="M1782 499C1730 497 1715 477 1684 425M1495.500 402C1494 425 1487 437 1477 442M1528.500 402C1541 455 1555 495 1602 537M1865.500 526C1866 570 1857 600 1847 616M1444.500 620C1500 628 1560 634 1572 645M1663 714C1696 716 1712 724 1714 741M1714 741L1637 748M1714 741C1690 743 1675 746 1665 750M1633 767C1615 785 1605 800 1595 813M1474 892L1540 950M1567 970C1600 992 1615 990 1627 968M1822 766C1830 800 1840 820 1855 836M1936 750C1965 750 1985 748 2005 745M2217 887C2260 888 2280 875 2294 841M2244 521C2270 465 2240 413 2175 413 2150 413 2130 418 2110 424"/>
              <g marker-end="url(#arrow)"><path d="M1670 406C1655 388 1640 382 1606 381"/><path d="M1346 460C1333 467 1329 480 1327 500"/><path d="M1622 556C1690 612 1740 655 1793 717"/><path d="M1837 635C1825 660 1823 690 1821 717"/><path d="M1568 664C1560 690 1640 700 1764 717"/><path d="M1524 708H1479"/><path d="M1565 766.500L1496 791"/><path d="M1582 832C1565 860 1540 888 1473 891"/><path d="M1692 957L1735 970"/><path d="M1928 850C1955 848 1975 845 1985 846 2010 847 2018 865 2025 883"/><path d="M2060 727C2090 712 2110 708 2181 708"/><path d="M2300.500 822C2306 800 2305 770 2305 742"/><path d="M2061 442C2020 460 1985 480 1950 499"/></g>
            </g>
            <g fill="#ebf0fe" stroke="#8eb2e6" stroke-width="1.500">
              <rect x="1422" y="364.500" width="184" height="37"/><rect x="1253.500" y="500" width="197" height="38"/><rect x="1782" y="474.500" width="168" height="51"/><rect x="1332" y="606" width="112.500" height="28"/><rect x="1282" y="690" width="196" height="37"/><rect x="1282" y="772" width="213" height="37"/><rect x="1282" y="869.500" width="190" height="42"/><rect x="1714.500" y="717.500" width="221.500" height="48.500"/><rect x="1735.500" y="944.500" width="200.500" height="52"/><rect x="2151.500" y="521.500" width="174.500" height="52"/><rect x="2181" y="673" width="249" height="69"/><rect x="2025" y="862.500" width="186" height="42"/>
            </g>
            <g class="nodes">
              <text x="1427" y="383" textLength="174" lengthAdjust="spacingAndGlyphs">hwLacpNegotiateFailed_active</text><text x="1271" y="519" textLength="161" lengthAdjust="spacingAndGlyphs">hwLacpTotalLinkLoss_active</text><text x="1786" y="501" textLength="159" lengthAdjust="spacingAndGlyphs">hwPortPhysicalDown_active</text><text x="1341" y="620" textLength="94" lengthAdjust="spacingAndGlyphs">linkDown_active</text><text x="1287" y="708" textLength="186" lengthAdjust="spacingAndGlyphs">TWAMP_TWOWAY_LOSS_active</text><text x="1299" y="790" textLength="179" lengthAdjust="spacingAndGlyphs">TWAMP_TWOWAY_LOC_active</text><text x="1296" y="891" textLength="161" lengthAdjust="spacingAndGlyphs">ospfNbrStateChange_active</text><text x="1722" y="742" textLength="207" lengthAdjust="spacingAndGlyphs">hwExtAllMemberDownNotify_active</text><text x="1754" y="970" textLength="164" lengthAdjust="spacingAndGlyphs">mplsLdpSessionDown_active</text><text x="2164" y="548" textLength="149" lengthAdjust="spacingAndGlyphs">hwLocalFaultAlarm_active</text><text x="2190" y="708" textLength="229" lengthAdjust="spacingAndGlyphs">hwMplsTunnelHotstandbySwitch_active</text><text x="2036" y="883" textLength="163" lengthAdjust="spacingAndGlyphs">hwBfdSessFaultDown_active</text>
              <text x="1619" y="415" textLength="115" lengthAdjust="spacingAndGlyphs">接口属于trunk成员口</text><text x="1339" y="452" textLength="165" lengthAdjust="spacingAndGlyphs">协商失败接口属于trunk成员口</text><text x="1529" y="547" textLength="163" lengthAdjust="spacingAndGlyphs">协商失败接口属于trunk成员口</text><text x="1724" y="625" textLength="235" lengthAdjust="spacingAndGlyphs">Eth-trunk最后一个up的成员接口变成down</text><text x="1513" y="655" textLength="119" lengthAdjust="spacingAndGlyphs">BFD 检测trunk成员口</text><text x="1523" y="708" textLength="140" lengthAdjust="spacingAndGlyphs">配置了TWAMP for trunk</text><text x="1526" y="758" textLength="139" lengthAdjust="spacingAndGlyphs">配置了TWAMP for trunk</text><text x="1526" y="823" textLength="124" lengthAdjust="spacingAndGlyphs">eth-trunk使能了OSPF</text><text x="1809" y="845" textLength="119" lengthAdjust="spacingAndGlyphs">配置了BFD For trunk</text><text x="1945" y="736" textLength="186" lengthAdjust="spacingAndGlyphs">Tunnel主LSP经过这个TRUNK接口</text><text x="2009" y="433" textLength="147" lengthAdjust="spacingAndGlyphs">底层驱动先检测到本端故障</text><text x="2187" y="832" textLength="220" lengthAdjust="spacingAndGlyphs">tunnel主LSP经过BFD检测的TRUNK接口</text><text x="1465" y="959" textLength="227" lengthAdjust="spacingAndGlyphs">1、ospf使能接口与本地LDP使能接口一致</text><text x="1465" y="977" textLength="24" lengthAdjust="spacingAndGlyphs">或者</text><text x="1465" y="996" textLength="129" lengthAdjust="spacingAndGlyphs">2、LDP依赖的路由撤销</text>
            </g>
            <text class="s-foot" x="632" y="1202" textLength="228" lengthAdjust="spacingAndGlyphs">www.huaweicloud.com</text><text class="s-foot num" x="898" y="1202" textLength="18" lengthAdjust="spacingAndGlyphs">16</text>
            <use href="#hw-mark" x="2192" y="1174" width="56" height="43"/><text class="hw" x="2255" y="1209" font-size="29" textLength="127" lengthAdjust="spacingAndGlyphs">HUAWEI</text>
          </g>
        </svg>
        <div class="vbar right"><span class="vbtn"><i class="up"></i></span><span class="vthumb"></span><span class="vbtn"><i class="down"></i></span><svg width="16" height="48" viewBox="0 0 16 48"><path d="M8 7l5 5H3zM8 12l5 5H3zM8 41l5-5H3zM8 36l5-5H3z" fill="#777"/><path d="M3 31h10" stroke="#777"/></svg></div>
      </div>
      <div class="notes">单击此处添加备注</div>
    </section>
    <svg class="cursor" viewBox="0 0 13 20"><path d="M1 1v15l3.500-3 3 6 2-1-3-6H11z" fill="#fff" stroke="#555"/></svg>
    <svg class="float-ball" viewBox="0 0 62 62"><circle cx="31" cy="31" r="28" fill="#fff" stroke="url(#ring)" stroke-width="4"/><g fill="none" stroke="#0b0b0b" stroke-width="5"><path d="M19 18l12 6 12-6M15 28c8 3 12 5 12 10v9M47 28c-8 3-12 5-12 10v9"/></g></svg>
  </main>

  <footer class="status">
    <span class="slide-count">幻灯片 第 16 张，共 20 张</span><svg class="book" width="18" height="14" viewBox="0 0 18 14"><path d="M1 1h16v12H1zM9 1v12M11 8l5-6" fill="none" stroke="#999"/></svg><span class="lang">中文(中国)</span>
    <div class="status-right">
      <span class="st note"><svg width="14" height="14" viewBox="0 0 14 14"><path d="M7 0l4 5H3z" fill="#555"/><path d="M0 7h14M0 10h14M0 13h9" stroke="#666"/></svg>备注</span>
      <span class="st comment"><svg width="19" height="16" viewBox="0 0 19 16"><path d="M1 1h17v11H9l-4 4v-4H1z" fill="#555"/></svg>批注</span>
      <span class="view on"><svg width="18" height="16" viewBox="0 0 18 16"><path d="M1 1h16v14H1zM5 1v14M8 4h7v5H8zM5 12h12"/></svg></span>
      <span class="view"><svg width="18" height="16" viewBox="0 0 18 16"><path d="M1 1h6v5H1zM11 1h6v5h-6zM1 10h6v5H1zM11 10h6v5h-6z"/></svg></span>
      <span class="view"><svg width="18" height="16" viewBox="0 0 18 16"><path d="M1 1h7l1 1 1-1h7v13h-7l-1 1-1-1H1zM9 2v13M3 4h4M3 7h4M3 10h4M11 4h4M11 7h4M11 10h4"/></svg></span>
      <span class="view"><svg width="18" height="16" viewBox="0 0 18 16"><path d="M0 1h18M2 1v8h14V1M9 9v6M5 15h8"/></svg></span>
      <span class="zoom"><i class="minus"></i><i class="track"><i></i></i><i class="plus"></i></span><span class="pct">118%</span>
      <svg class="fit" width="16" height="16" viewBox="0 0 16 16"><path d="M1 1h14v14H1zM8 2v5M8 9v5M2 8h5M9 8h5M4 4l2 2M12 4l-2 2M4 12l2-2M12 12l-2-2"/></svg>
    </div>
  </footer>

  <section class="dock">
    <div class="taskbar">
      <div class="apps">
        <span class="app-i none"><svg viewBox="0 0 32 32"><path d="M5 7h10v9H5zM17 6h10v10H17zM5 18h10v9H5zM17 18h10v10H17z" fill="#777"/></svg></span>
        <span class="app-i"><svg viewBox="0 0 32 32"><circle cx="16" cy="16" r="14" fill="#a8432f"/><path d="M3 10l10 19A14 14 0 0 1 3 10z" fill="#3a7d45"/><path d="M16 9h13a14 14 0 0 1-14 21l7-11z" fill="#b08b2c"/><circle cx="16" cy="16" r="6" fill="#3d6fae" stroke="#aaa" stroke-width="2"/></svg></span>
        <span class="app-i"><svg viewBox="0 0 32 32"><path d="M14 6h17v20H14z" fill="#2f6ba0"/><path d="M14 16h17v11H14z" fill="#6a7f8f"/><rect y="7" width="17" height="18" fill="#1b4f86"/><text x="3" y="21" font-size="15" font-weight="700" fill="#aab">O</text></svg></span>
        <span class="app-i"><svg viewBox="0 0 32 32"><path d="M2 5h11l3 4h14v18H2z" fill="#8d7331"/><path d="M6 18h20v9H6z" fill="#2b5d8c"/></svg></span>
        <span class="app-i"><svg viewBox="0 0 32 32"><path d="M15 5h15v22H15z" fill="#777f90"/><path d="M19 10h9M19 14h9M19 18h9M19 22h9" stroke="#23395f"/><path d="M2 7l17-3v24L2 25z" fill="#233f72"/><text x="4" y="21" font-size="14" font-weight="700" fill="#98a4ba">W</text></svg></span>
        <span class="app-i"><svg viewBox="0 0 32 32"><rect x="1" y="1" width="30" height="30" rx="6" fill="#264f86"/><path d="M9 9h9a5 5 0 0 1 0 10H9M12 25l4 2 4-2" fill="none" stroke="#7c93b5" stroke-width="3"/></svg></span>
        <span class="app-i"><svg viewBox="0 0 32 32"><circle cx="16" cy="16" r="14" fill="#1f6382"/><path d="M8 9c10-7 24 2 20 12-4 2-10 1-10-3 1-6-6-8-10-9z" fill="#397b62"/><path d="M14 15c-2 8 4 13 12 11-8 6-20 1-18-8z" fill="#163d60"/></svg></span>
        <span class="app-i"><svg viewBox="0 0 32 32"><path d="M13 5h17v22H13z" fill="#45735a"/><path d="M2 7l17-3v24L2 25z" fill="#1d5135"/><text x="5" y="21" font-size="14" font-weight="700" fill="#97ac9f">X</text></svg></span>
        <span class="app-i lit"><svg viewBox="0 0 32 32"><path d="M13 6h17v20H13z" fill="#8a5a50"/><path d="M2 7l17-3v24L2 25z" fill="#7e2a1d"/><text x="6" y="21" font-size="14" font-weight="700" fill="#b9a19c">P</text></svg></span>
        <span class="app-i"><svg viewBox="0 0 32 32"><path d="M5 2l18 3 4 18-17-3z" fill="#26367e" stroke="#667"/><circle cx="22" cy="25" r="6" fill="#666"/></svg></span>
        <span class="app-i orange"><svg viewBox="0 0 32 32"><path d="M2 4h22l6 8v16H2z" fill="#83291f"/><path d="M22 2l8 12V2z" fill="#999"/><text x="3" y="21" font-size="8" fill="#b5625a">WeLink</text></svg></span>
        <span class="app-i"><svg viewBox="0 0 32 32"><rect x="1" y="1" width="30" height="30" rx="7" fill="#1d4a82"/><rect x="7" y="9" width="13" height="14" rx="3" fill="none" stroke="#7d92b0" stroke-width="2"/><path d="M21 13l5-3v12l-5-3" fill="none" stroke="#7d92b0" stroke-width="2"/><text x="9" y="19" font-size="8" fill="#7d92b0">Ai</text></svg></span>
      </div>
      <div class="tray">
        <svg viewBox="0 0 24 24"><path d="M4 16l8-8 8 8"/></svg><svg viewBox="0 0 24 24"><path d="M6 4h17v13H6zM14 17v4M9 21h10M2 4h4v6H2z"/></svg><svg viewBox="0 0 24 24"><path d="M2 9h4l5-5v16l-5-5H2zM14 9c2 2 2 4 0 6M17 6c4 4 4 8 0 12M20 4c4 5 4 11 0 16"/></svg><svg viewBox="0 0 24 24"><rect x="8" y="2" width="8" height="14" rx="4" fill="#777"/><path d="M5 12c0 9 14 9 14 0M12 19v4"/></svg><svg viewBox="0 0 24 24"><path d="M3 5l17-3v19H3zM9 9c3-3 7-1 6 2l-6 5h7"/><circle cx="19" cy="18" r="4" fill="#8e3030" stroke="none"/></svg><svg viewBox="0 0 24 24"><rect x="1" y="1" width="21" height="21" rx="6" fill="#85929a" stroke="none"/><circle cx="12" cy="12" r="6" fill="#19769a" stroke="none"/></svg><svg viewBox="0 0 24 24"><path d="M8 13c-7-1-9 8-3 8 7 0 5-16 11-18 4 1-1 14-4 13-2-3 8-5 11-3"/></svg><span class="ime">中</span><svg viewBox="0 0 24 24"><path d="M3 3l18-1 1 18-18 2z" fill="#8c3f19" stroke="none"/><path d="M17 7c-5-3-11 0-7 4 6 1 9 2 4 6-2 1-5 0-7-1" stroke="#aaa" stroke-width="3"/></svg>
        <span class="clock"><span>10:36</span><span>2025/3/20</span></span>
        <svg class="notif" viewBox="0 0 24 24"><path d="M2 2h20v16l-4 4H2zM5 7h13M5 12h13" fill="#555"/></svg>
      </div>
    </div>
    <div class="controls">
      <div class="av-set">
        <span class="ctl"><svg width="22" height="27" viewBox="0 0 22 27"><rect x="6" y="1" width="10" height="16" rx="5" fill="#f5f5f5"/><path d="M3 12c0 11 16 11 16 0M11 20v6" fill="none" stroke="#f5f5f5" stroke-width="2"/><path d="M2 4l18 18" stroke="#e23b3b" stroke-width="2"/></svg>Microphone</span><i class="chev"></i>
        <span class="ctl"><svg width="28" height="22" viewBox="0 0 28 22"><path d="M1 3h18v16H1zM20 9l7-5v14l-7-5z" fill="#f5f5f5"/><path d="M3 2l20 19" stroke="#e23b3b" stroke-width="2"/></svg>Video</span><i class="chev"></i>
        <span class="ctl"><svg width="24" height="24" viewBox="0 0 24 24"><path d="M1 8h5l8-7v22l-8-7H1z" fill="#f5f5f5"/><path d="M17 8c2 2 2 6 0 8M19 4c5 4 5 12 0 16" fill="none" stroke="#f5f5f5" stroke-width="2"/></svg>Speaker</span><i class="chev"></i>
      </div>
      <div class="mid-set">
        <span class="ctl"><svg width="24" height="24" viewBox="0 0 24 24" fill="#f5f5f5"><path d="M10 1a5 5 0 0 1 5 5c0 4-2 6-5 6s-5-2-5-6a5 5 0 0 1 5-5zM1 17c0-5 18-5 18 0v6H1zM16 1c4 1 4 9 0 10zM20 14c3 1 3 4 3 7h-3z"/></svg>Participants</span>
        <span class="ctl share"><svg width="24" height="24" viewBox="0 0 24 24"><path d="M1 1h22v4H1zM1 7h22v16H1z" fill="#64cf79"/><path d="M7 15v5M12 12v8M17 17v3" stroke="#222" stroke-width="2"/></svg>Share</span>
        <span class="ctl"><svg width="26" height="26" viewBox="0 0 26 26"><path d="M13 2c7 0 12 5 12 11s-5 10-12 10l-8 3 1-5C-4 13 3 2 13 2z" fill="#f5f5f5"/></svg>Chats</span>
        <span class="ctl"><svg width="22" height="25" viewBox="0 0 22 25"><path d="M6 14V4m4 9V2m4 11V3m4 11V6" stroke="#f5f5f5" stroke-width="3.200" stroke-linecap="round"/><path d="M5 11h15v5c0 12-13 11-15 3L1 13c1-2 3-1 4 2z" fill="#f5f5f5"/></svg>Raise hand</span>
        <span class="ctl"><svg width="24" height="24" viewBox="0 0 24 24"><path d="M1 2h22v17H12l-3 4-2-4H1z" fill="#f5f5f5"/><path d="M4 9h8M4 14h14M13 11l8-9" stroke="#222" stroke-width="2"/></svg>Feedback</span>
      </div>
      <span class="ctl leave"><svg width="22" height="23" viewBox="0 0 22 23"><path d="M1 1l9 3v18l-9-4z" fill="#f4696b"/><path d="M1 1h15v6M16 13v5h-5M13 10h7M17 6l4 4-4 4" fill="none" stroke="#f4696b" stroke-width="1.800"/></svg>Leave</span>
    </div>
  </section>

  <div class="chat-pill"><svg width="18" height="17" viewBox="0 0 18 17"><path d="M9 1c5 0 8 3 8 7s-3 7-8 7l-5 2v-3C-2 9 2 1 9 1z" fill="#fff"/></svg><svg width="8" height="12" viewBox="0 0 8 12"><path d="M7 1L2 6l5 5" fill="none" stroke="#fff" stroke-width="1.500"/></svg></div>
  <div class="shared-tag">Heluyou h00602717's shared screen.</div>
  <div class="talk-pill"><svg width="14" height="13" viewBox="0 0 14 13"><path d="M5 1c3 0 4 5 2 7l2 3v2H0v-2l3-3C1 6 2 1 5 1z" fill="#fff"/><path d="M10 3c1 2 1 5 0 7M12 2c2 3 2 7 0 9" fill="none" stroke="#fff"/></svg>Heluyou h00602717</div>
</div>
</body>
</html>
```
FILE: styles.css
```css
* { box-sizing: border-box; }
body { margin: 0; width: 2560px; height: 1415px; overflow: hidden; background: #000; font-family: "Noto Sans", "Noto Sans CJK SC", sans-serif; }
.defs { position: absolute; }
i { font-style: normal; }
.app { position: relative; display: flex; flex-direction: column; width: 2560px; height: 1415px; overflow: hidden; }

/* title bar */
.titlebar { position: relative; display: flex; justify-content: space-between; height: 57px; margin: 0 2px; background: #c75b2c; border-bottom: 1px solid #b06a4c; color: #fbe6db; font: 15px "Noto Sans CJK SC", sans-serif; }
.tabs { display: flex; align-items: stretch; padding-top: 19px; }
.tab { padding: 0 13.6px; line-height: 35px; }
.tab.first { padding: 0 23px 0 21px; }
.tab.active { background: #f5f5f5; color: #c4582c; height: 38px; }
.tell { display: flex; align-items: center; gap: 5px; margin-left: 15px; height: 38px; padding-bottom: 2px; }
.share-link { display: flex; align-items: center; gap: 5px; padding: 19px 25px 0 0; font-size: 14.5px; }
.pill { position: absolute; top: -12px; display: flex; align-items: center; overflow: hidden; border-radius: 4px; color: #fff; font: 600 13px Roboto, sans-serif; }
.recording { left: 18px; width: 87px; height: 21px; background: #494949; gap: 6px; padding-left: 5px; }
.recording i { width: 14px; height: 14px; border: 4px solid #bbb; border-radius: 50%; background: #d33; }
.speaker-pill { left: 2423px; width: 105px; height: 23px; background: #783217; gap: 9px; padding-left: 9px; font-weight: 500; }
.speaker-pill i { width: 17px; height: 15px; border: 1px solid #fff; }
.title-bits { position: absolute; left: 112px; top: 0; }
.title-bits svg { display: block; }
.green-line { position: absolute; left: 1120px; top: 0; width: 316px; height: 2px; background: #62c878; }
.account { position: absolute; left: 2258px; top: -13px; color: #e9b49c; font-size: 14px; line-height: 18px; }
.min-mark { position: absolute; left: 2348px; top: 0; width: 16px; height: 2px; background: #f2cdbb; }

/* ribbon */
.ribbon { position: relative; display: flex; height: 113px; margin: 0 2px; background: #f5f5f5; border-bottom: 2px solid #dcdcdc; color: #3a3a3a; font: 15px/20px "Noto Sans CJK SC", sans-serif; }
.group { position: relative; flex: none; }
.group::after { content: ""; position: absolute; right: 0; top: 4px; height: 104px; width: 1px; background: #dcdcdc; }
.g-clip { width: 137px; } .g-slides { width: 141px; } .g-font { width: 302px; } .g-para { width: 353px; } .g-draw { width: 407px; } .g-edit { width: 85px; } .g-help { width: 73px; }
.label { position: absolute; left: 0; right: 8px; bottom: 1px; text-align: center; }
.g-slides .label, .g-edit .label, .g-help .label { right: 2px; }
.g-clip .label { right: 20px; }
.launcher { position: absolute; right: 5px; bottom: 3px; width: 10px; height: 10px; fill: none; stroke: #777; }
.launcher.dim { stroke: #bbb; }
.body, .g-para, .g-draw, .g-edit, .g-help { display: flex; }
.big { display: flex; flex-direction: column; align-items: center; padding-top: 8px; }
.big svg { height: 38px; }
.big b { font-weight: 400; line-height: 19px; margin-top: 0; white-space: nowrap; }
.big .caret { margin-top: 9px; }
.big b.second { margin-top: 0; }
.big b.second .caret { display: inline-block; margin: 0 0 3px 6px; }
.g-clip .big { width: 57px; }
.g-clip .big b { margin-top: 1px; }
.g-slides .big { width: 66px; }
.rows { display: grid; grid-template-rows: repeat(3, 28px); padding-top: 3px; height: 88px; }
.rows.tight { grid-template-rows: repeat(3, 27.5px); padding-top: 2px; }
.rows span { display: flex; align-items: center; gap: 5px; white-space: nowrap; }
.g-slides .rows { padding-left: 1px; }
.g-slides .rows span { gap: 2px; }
.g-slides .rows .caret { margin-left: 4px; }
.caret { display: block; width: 0; height: 0; border: 3.5px solid transparent; border-top: 4.5px solid #666; border-bottom: 0; }
.caret.dim { border-top-color: #b5b5b5; }
.caret.wide { margin-left: 5px; }
.dimrows { color: #a9a9a9; }
.ln { fill: none; stroke: #ababab; stroke-width: 1.3; }
.vsep { display: block; width: 1px; height: 26px; background: #dadada; }
.g-font { color: #9b9b9b; }
.g-font .label, .g-para .label, .g-draw .label { color: #3a3a3a; }
.frow1, .frow2, .prow1, .prow2 { display: grid; align-items: center; justify-items: center; }
.frow1 { grid-template-columns: 145px 60px 28px 24px 10px 26px; height: 28px; margin: 12px 0 0 5px; }
.box { display: flex; align-items: center; justify-content: flex-end; width: 100%; height: 28px; padding-right: 3px; background: #fff; border: 1px solid #c8c8c8; }
.box.size { justify-content: space-between; padding: 0 4px; border-left: 0; font: 15px "Noto Sans"; }
.ft { font: 20px "Noto Sans"; } .ft.sm { font-size: 18px; } .ft sup { font-size: 10px; line-height: 0; vertical-align: 9px; }
.frow2 { grid-template-columns: 26px 28px 25px 27px 25px 25px 10px 30px 8px 15px 22px 13px 27px 12px; height: 30px; margin: 8px 0 0 3px; font: 17px "Noto Sans"; }
.frow2 em { font-family: "Liberation Serif"; font-weight: 700; }
.frow2 .shadow { text-shadow: 2px 1px 1px #ccc; font-size: 19px; }
.frow2 s { font-size: 12px; } .frow2 .av { font-size: 14px; letter-spacing: -1px; border-bottom: 1px solid #aaa; line-height: 18px; }
.pcol { width: 195px; padding-left: 3px; }
.prow1 { grid-template-columns: 28px 11px 28px 10px 14px 22px 26px 12px 22px 12px; height: 28px; margin-top: 12px; }
.prow2 { grid-template-columns: 28px 24px 27px 26px 25px 10px 24px 12px; height: 30px; margin-top: 8px; }
.g-para .rows { margin-left: -2px; }
.g-para .rows span { gap: 1px; } .g-para .rows .caret { margin-left: 6px; }
.gallery { display: flex; width: 177px; height: 78px; margin: 6px 0 0 5px; border: 1px solid #c4c4c4; background: #fff; }
.gallery > svg { flex: none; }
.gscroll { flex: 1; display: grid; grid-template-rows: 26px 24px 26px; border-left: 1px solid #c8c8c8; }
.gscroll span { display: grid; place-items: center; border-bottom: 1px solid #d6d6d6; }
.gscroll .off { background: #e4e4e4; }
.gscroll .off i { border: 3px solid transparent; border-bottom: 4px solid #bbb; border-top: 0; }
.gscroll .more { position: relative; }
.gscroll .more::before { content: ""; position: absolute; left: -4px; top: -8px; width: 8px; height: 1px; background: #666; }
.big.arrange { width: 56px; } .big.quick { width: 62px; color: #b0b0b0; }
.g-draw .rows { margin-left: 2px; } .g-draw .rows span { gap: 4px; } .g-draw .rows .caret { margin-left: 0; }
.g-edit .rows { margin-left: 7px; } .g-edit .rows span { gap: 4px; }
.g-edit .rows .wide { margin-left: 6px; }
.g-help .rows { margin-left: 7px; } .g-help .rows span { gap: 4px; }
.collapse { position: absolute; right: 11px; top: 98px; width: 12px; height: 8px; }

/* workspace */
.work { position: relative; display: flex; height: 1167px; margin: 0 2px; background: #eaeaea; overflow: hidden; border-bottom: 2px solid #d8d8d8; }
.thumbs { display: flex; justify-content: space-between; width: 469px; border-right: 2px solid #f8f8f8; padding-right: 3px; }
.thumbs ol { margin: -3.5px 0 0; padding: 0; list-style: none; }
.thumbs li { display: flex; height: 211px; margin-bottom: 24.5px; }
.thumbs li b { width: 45px; padding-left: 6px; margin-top: -8px; font: 21px/26px "Noto Sans"; color: #666; }
.thumb { display: block; width: 375px; height: 211px; background: #fff; outline: 1px solid #d2d2d2; }
.current .thumb { outline: 3px solid #d4602f; }
.thumbs .current b { color: #d05a2c; }
.vbar { display: flex; flex-direction: column; align-items: center; background: #dfdfdf; width: 18px; }
.vbtn { display: grid; place-items: center; width: 18px; height: 18px; background: #fff; border: 1px solid #e0e0e0; }
.vbtn .up, .vbtn .down { border: 4.5px solid transparent; }
.vbtn .up { border-bottom: 6px solid #777; border-top: 0; } .vbtn .down { border-top: 6px solid #777; border-bottom: 0; }
.vthumb { width: 18px; background: #fff; border: 1px solid #d5d5d5; }
.vbar.left { margin-top: 3px; height: 1161px; }
.left .vthumb { margin: 733px 0 117px; height: 275px; }
.stage { flex: 1; display: flex; flex-direction: column; }
.canvas { display: flex; justify-content: space-between; height: 1099px; border-bottom: 2px solid #d6d6d6; }
.slide { display: block; width: 1878px; height: 1056px; margin: 20px 0 0 95px; background: #fff; outline: 1px solid #d4d4d4; }
.vbar.right { width: 20px; padding-top: 3px; height: 1029px; }
.right .vthumb { margin: 743px 0 198px; height: 50px; flex: none; }
.right .vbtn { flex: none; }
.right svg { flex: none; }
.notes { padding: 7px 0 0 12px; color: #6c6c6c; font: 18px/26px "Noto Sans CJK SC"; letter-spacing: .3px; }
.cursor { position: absolute; left: 709px; top: 206px; width: 13px; height: 20px; }
.float-ball { position: absolute; left: 2415px; top: 605px; width: 62px; height: 62px; }

/* slide typography */
.s-title, .s-bold text, .nodes text, .s-foot { dominant-baseline: central; }
.s-title { font: 700 40px "Noto Sans", "Noto Sans CJK SC"; fill: #d41a05; }
.s-bold { font: 700 22px "Noto Sans", "Noto Sans CJK SC"; fill: #111; }
.alarms { font: 24px "Liberation Mono", monospace; fill: #555b62; }
.nodes { font: 14.5px "Noto Sans", "Noto Sans CJK SC"; fill: #2e3238; }
.s-foot { font: 500 22px "Noto Sans"; fill: #777; }
.s-foot.num { font-size: 16px; fill: #aaa; }
.hw { font-family: "Noto Sans"; font-weight: 600; fill: #1e1718; }

/* thumbnail typography */
.tt { font: 700 23px "Noto Sans", "Noto Sans CJK SC"; fill: #c93226; dominant-baseline: central; }
.mid { text-anchor: middle; fill: #777; }
.mid.redmid { fill: #e04848; }
.mid.warm { fill: #c4715a; }
.mid text, .bb text, .tiny text, text.tiny { dominant-baseline: central; }
.bb { font-weight: 600; }
.tiny { fill: #777; } .tiny.red { fill: #d05050; }
.boxes { fill: #fff; stroke: #555; stroke-width: 3; }

/* status bar */
.status { display: flex; align-items: center; height: 22px; margin: 0 2px; background: #f5f5f5; color: #555; font: 15px "Noto Sans CJK SC"; }
.slide-count { width: 205px; padding-left: 6px; white-space: nowrap; }
.lang { margin-left: 16px; }
.status-right { margin-left: auto; display: flex; align-items: center; height: 22px; }
.st { display: flex; align-items: center; gap: 5px; width: 70px; font-size: 14.5px; }
.st.comment { gap: 3px; width: 74px; }
.view { display: grid; place-items: center; width: 41.500px; height: 22px; }
.view.on { background: #cacaca; }
.view svg, .fit { fill: none; stroke: #808080; }
.zoom { display: flex; align-items: center; gap: 4px; margin-left: 4px; }
.minus, .plus { width: 10px; height: 2px; background: #666; position: relative; }
.plus::after { content: ""; position: absolute; left: 4px; top: -4px; width: 2px; height: 10px; background: #666; }
.track { width: 124px; height: 1px; background: #aaa; position: relative; }
.track i { position: absolute; left: 65px; top: -7px; width: 6px; height: 14px; background: #666; }
.pct { margin-left: 12px; width: 55px; font: 15px "Noto Sans"; }
.fit { margin-right: 7px; }

/* dock */
.dock { position: relative; height: 56px; background: #232525; border-top: 5px solid #4b4b4b; }
.taskbar { display: flex; justify-content: space-between; height: 51px; }
.apps { display: flex; }
.app-i { width: 61.8px; height: 51px; display: grid; place-items: center; padding-bottom: 2px; box-shadow: inset 0 -3px #3d5166; border-left: 5px solid #232525; border-right: 5px solid #232525; }
.app-i:first-child { margin-left: 4px; }
.app-i svg { width: 30px; height: 30px; opacity: .72; }
.app-i.none { box-shadow: none; }
.app-i.none svg { opacity: .45; }
.app-i.lit { background: #343535; border-left-color: #343535; border-right-color: #343535; }
.app-i.orange { background: #75431b; border-left-color: #75431b; border-right-color: #75431b; }
.tray { display: flex; align-items: center; gap: 7.4px; padding-right: 32px; }
.tray svg { width: 24.5px; height: 20px; fill: none; stroke: #6c6c6c; stroke-width: 1.6; }
.ime { width: 24.5px; text-align: center; font: 19px "Noto Sans CJK SC"; color: #777; }
.clock { display: flex; flex-direction: column; align-items: center; width: 76px; margin-left: 12px; color: #6f6f6f; font: 15.5px/22px "Noto Sans"; }
.tray .notif { margin-left: 9px; stroke: #222; opacity: .7; }
.controls { position: absolute; inset: 0; }
.ctl { display: grid; grid-template-rows: 28px 20px; place-items: center; font: 12.5px Roboto, sans-serif; color: #e8e8e8; white-space: nowrap; }
.av-set { position: absolute; left: 0; top: 0; display: grid; grid-template-columns: 70px 1px 69px 1px 69px 1px; align-items: start; }
.chev { width: 9px; height: 9px; border: solid #ddd; border-width: 1.5px 0 0 1.5px; transform: rotate(45deg); margin: 12px 0 0 -15px; }
.mid-set { position: absolute; left: 1105px; top: 0; display: grid; grid-template-columns: repeat(5, 70px); }
.share { color: #64cf79; }
.leave { position: absolute; left: 2509px; top: 0; color: #f4696b; }

/* overlays */
.chat-pill { position: absolute; left: 8px; top: 1305px; width: 49px; height: 30px; display: flex; align-items: center; justify-content: center; gap: 9px; border-radius: 4px; background: #3d3d3d; }
.shared-tag { position: absolute; left: 2px; top: 1338px; width: 219px; height: 20px; padding-left: 3px; border-radius: 0 3px 3px 0; background: rgba(90, 90, 90, .88); color: #fff; font: 500 12px/20px Inter, sans-serif; white-space: nowrap; }
.talk-pill { position: absolute; left: 1201px; top: 1327px; width: 157px; height: 24px; display: flex; align-items: center; justify-content: center; gap: 5px; border-radius: 10px; background: #5c5c5c; color: #fff; font: 500 12px Inter, sans-serif; white-space: nowrap; }
```
